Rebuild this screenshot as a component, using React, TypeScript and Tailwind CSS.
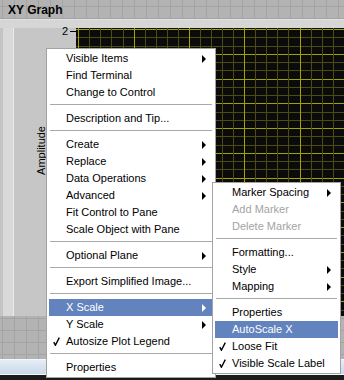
import React from "react";

type Item = {
  label?: string;
  sep?: boolean;
  arrow?: boolean;
  check?: boolean;
  hot?: boolean;
  disabled?: boolean;
};

const mainItems: Item[] = [
  { label: "Visible Items", arrow: true },
  { label: "Find Terminal" },
  { label: "Change to Control" },
  { sep: true },
  { label: "Description and Tip..." },
  { sep: true },
  { label: "Create", arrow: true },
  { label: "Replace", arrow: true },
  { label: "Data Operations", arrow: true },
  { label: "Advanced", arrow: true },
  { label: "Fit Control to Pane" },
  { label: "Scale Object with Pane" },
  { sep: true },
  { label: "Optional Plane", arrow: true },
  { sep: true },
  { label: "Export Simplified Image..." },
  { sep: true },
  { label: "X Scale", arrow: true, hot: true },
  { label: "Y Scale", arrow: true },
  { label: "Autosize Plot Legend", check: true },
  { sep: true },
  { label: "Properties" },
];

const scaleItems: Item[] = [
  { label: "Marker Spacing", arrow: true },
  { label: "Add Marker", disabled: true },
  { label: "Delete Marker", disabled: true },
  { sep: true },
  { label: "Formatting..." },
  { label: "Style", arrow: true },
  { label: "Mapping", arrow: true },
  { sep: true },
  { label: "Properties" },
  { label: "AutoScale X", hot: true },
  { label: "Loose Fit", check: true },
  { label: "Visible Scale Label", check: true },
];

function Check() {
  return (
    <svg width="7" height="9" viewBox="0 0 7 9">
      <path d="M0.8 5.2 L2.4 8.2 L6.3 0.6" fill="none" stroke="currentColor" strokeWidth="1.4" />
    </svg>
  );
}

function Arrow() {
  return (
    <svg width="4" height="8" viewBox="0 0 4 8">
      <polygon points="0,0 4,4 0,8" fill="currentColor" />
    </svg>
  );
}

function Menu({ items, className }: { items: Item[]; className: string }) {
  return (
    <div className={`absolute bg-white border border-[#a2a2a2] p-px ${className}`}>
      {items.map((it, i) =>
        it.sep ? (
          <div key={i} className="h-[9px] pt-[3px] px-[2px]">
            <div className="h-px bg-[#a9a9a9]" />
          </div>
        ) : (
          <div
            key={i}
            className={`mx-px h-[17px] flex items-center pr-[7px] ${
              it.hot ? "bg-[#6283bd] text-white" : it.disabled ? "text-[#a3a3a3]" : "text-black"
            }`}
          >
            <div className="w-[17px] pl-[4px] flex items-center">{it.check && <Check />}</div>
            <span className="flex-1 leading-[17px] whitespace-nowrap">{it.label}</span>
            {it.arrow && <Arrow />}
          </div>
        )
      )}
    </div>
  );
}

function PlotGrid() {
  const w = 268;
  const h = 288;
  const vx = Array.from({ length: 25 }, (_, k) => 2.3 + k * 11.06);
  const hy = Array.from({ length: 36 }, (_, k) => 1 + k * 8.25);
  return (
    <svg width={w} height={h} className="block">
      <rect width={w} height={h} fill="#0b0b0b" />
      {hy.map((y, k) => (
        <line key={"h" + k} x1={0} x2={w} y1={Math.round(y) + 0.5} y2={Math.round(y) + 0.5}
          stroke={k % 3 === 0 ? "#a3a300" : "#4d4d12"} strokeWidth="1" />
      ))}
      {vx.map((x, k) => (
        <line key={"v" + k} y1={0} y2={h} x1={Math.round(x) + 0.5} x2={Math.round(x) + 0.5}
          stroke={k % 5 === 0 ? "#a3a300" : "#4d4d12"} strokeWidth="1" />
      ))}
    </svg>
  );
}

export default function App() {
  return (
    <div
      className="relative w-[344px] h-[380px] overflow-hidden flex flex-col text-[11px] bg-[#b3b3b3] bg-[linear-gradient(#a4a4a4_1px,transparent_1px),linear-gradient(90deg,#a4a4a4_1px,transparent_1px)] bg-size-[12px_12px] bg-position-[2px_6px]"
      style={{ fontFamily: '"Liberation Sans", Arial, sans-serif' }}
    >
      {/* Label */}
      <div className="h-[19px] pl-[8px] pt-[3px] text-[12px] font-bold leading-[14px] text-black">XY Graph</div>

      {/* Graph panel */}
      <div className="h-[297px] flex flex-col bg-[#c6c6c6]">
        <div className="h-[9px] bg-[#d6d6d6] border-t border-[#e2e2e2]" />
        <div className="flex-1 flex min-h-0">
          <div className="w-[3px] bg-[#c4c4c4]" />
          <div className="w-[10px] bg-[#d9d9d9]" />
          <div className="w-px bg-[#ececec]" />
          <div className="w-[62px] flex flex-col">
            <div className="h-[8px] flex justify-end items-start -mt-[1px]">
              <span className="leading-[9px] text-black">2</span>
              <div className="w-[6px] h-px bg-black ml-[2px] mt-[4px]" />
            </div>
            <div className="flex pl-[22px] mt-[91px]">
              <div className="w-[11px] flex justify-center">
                <span className="[writing-mode:vertical-rl] rotate-180 leading-[11px] text-black">Amplitude</span>
              </div>
            </div>
          </div>
          <div className="flex-1 overflow-hidden">
            <PlotGrid />
          </div>
        </div>
      </div>

      {/* Background below */}
      <div className="flex-1" />
      <div className="h-[16px] border-t border-[#f4f8fc] bg-[linear-gradient(#e6eef7,#c9d8e8)] border-b border-[#9aa9b8]" />
      <div className="h-[5px] bg-[#1b1b1b]" />

      <Menu items={mainItems} className="left-[46px] top-[48px] w-[170px]" />
      <Menu items={scaleItems} className="left-[212px] top-[182px] w-[129px]" />
    </div>
  );
}
